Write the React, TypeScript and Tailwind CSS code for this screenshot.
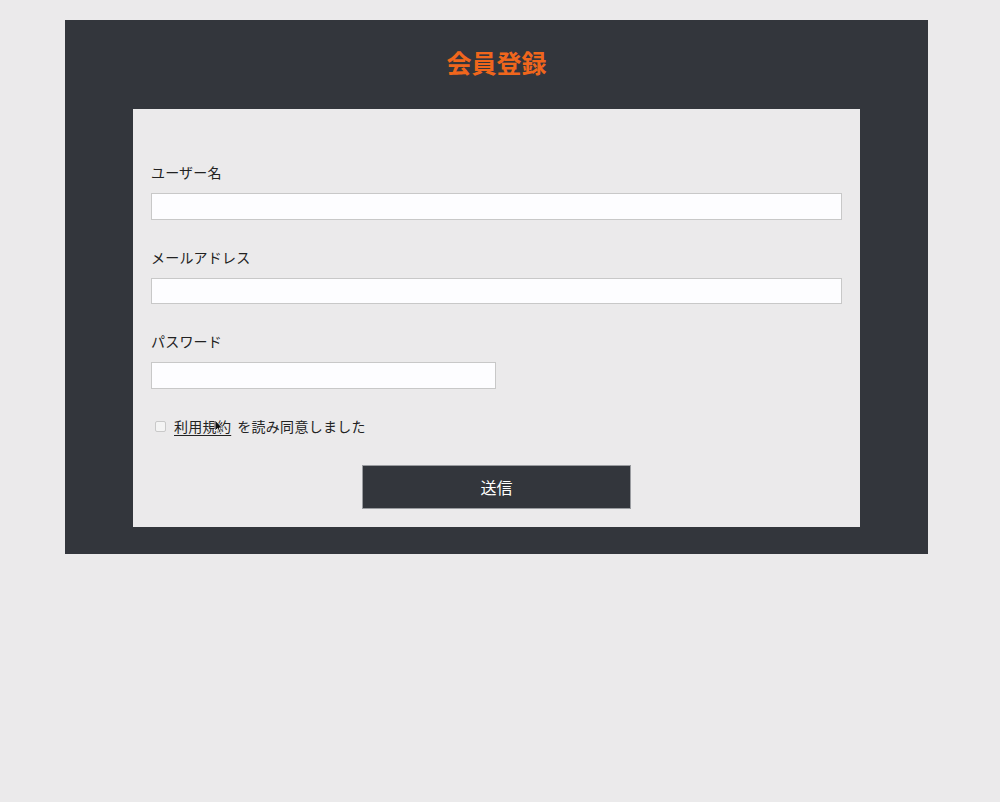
import React from "react";

export default function App() {
  const font = { fontFamily: '"Noto Sans CJK JP", "Noto Sans", sans-serif' };
  return (
    <div className="min-h-[802px] w-[1000px] bg-[#ebeaeb] pt-[20px]" style={font}>
      <div className="mx-[65px] w-[863px] bg-[#33363c] px-[68px] pb-[27px]">
        <h1 className="pt-[27px] pb-[32px] text-center text-[25px] font-bold leading-[30px] text-[#f0661c]">
          会員登録
        </h1>
        <div className="bg-[#ebeaeb] px-[18px] pt-[53px] pb-[18px]">
          <div>
            <label className="block text-[14px] leading-[20px] tracking-[0.2px] text-[#222]">ユーザー名</label>
            <input className="mt-[11px] block h-[27px] w-full border border-[#c8c8c8] bg-[#fdfdff]" />
          </div>
          <div className="mt-[27px]">
            <label className="block text-[14px] leading-[20px] tracking-[0.2px] text-[#222]">メールアドレス</label>
            <input className="mt-[11px] block h-[26px] w-full border border-[#c8c8c8] bg-[#fdfdff]" />
          </div>
          <div className="mt-[27px]">
            <label className="block text-[14px] leading-[20px] tracking-[0.2px] text-[#222]">パスワード</label>
            <input
              type="password"
              className="mt-[11px] block h-[27px] w-[345px] border border-[#c8c8c8] bg-[#fdfdff]"
            />
          </div>
          <div className="relative mt-[27px] flex items-center text-[14px] leading-[20px] tracking-[0.3px] text-[#222]">
            <span className="ml-[4px] mr-[8px] inline-block h-[11px] w-[11px] rounded-[2px] border border-[#c9c9c9] bg-[#f4f4f4]" />
            <span className="underline underline-offset-[3px]">利用規約</span>
            <span className="ml-[6px]">を読み同意しました</span>
            <svg
              className="absolute left-[63px] top-[3px]"
              width="10"
              height="15"
              viewBox="0 0 10 15"
            >
              <path d="M1 1 L1 12 L3.5 9.5 L5.5 14 L7 13.3 L5.2 9 L8.5 9 Z" fill="#111" stroke="#fff" strokeWidth="0.8" />
            </svg>
          </div>
          <div className="mt-[29px] flex justify-center">
            <button className="h-[44px] w-[269px] border border-[#9a9ca0] bg-[#33363c] text-[16px] text-white">
              送信
            </button>
          </div>
        </div>
      </div>
    </div>
  );
}
